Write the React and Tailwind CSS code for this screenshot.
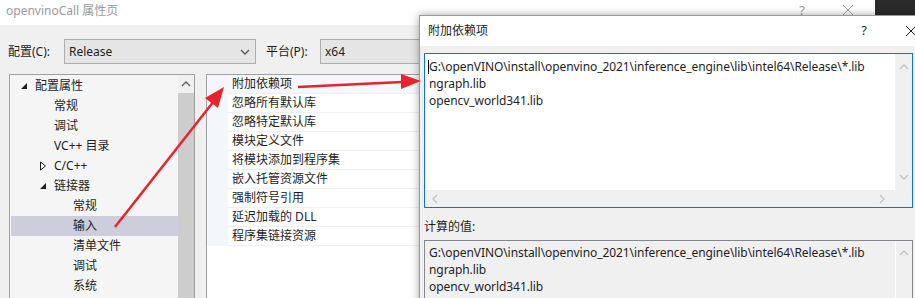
import React from "react";

const FONT = {
  fontFamily: '"Noto Sans", "Noto Sans CJK SC", sans-serif',
};

const treeItems = [
  { label: "配置属性", indent: 0, arrow: "open" },
  { label: "常规", indent: 1 },
  { label: "调试", indent: 1 },
  { label: "VC++ 目录", indent: 1 },
  { label: "C/C++", indent: 1, arrow: "closed" },
  { label: "链接器", indent: 1, arrow: "open" },
  { label: "常规", indent: 2 },
  { label: "输入", indent: 2, selected: true },
  { label: "清单文件", indent: 2 },
  { label: "调试", indent: 2 },
  { label: "系统", indent: 2 },
];

const props = [
  "附加依赖项",
  "忽略所有默认库",
  "忽略特定默认库",
  "模块定义文件",
  "将模块添加到程序集",
  "嵌入托管资源文件",
  "强制符号引用",
  "延迟加载的 DLL",
  "程序集链接资源",
];

const libs = [
  "G:\\openVINO\\install\\openvino_2021\\inference_engine\\lib\\intel64\\Release\\*.lib",
  "ngraph.lib",
  "opencv_world341.lib",
];

function Chevron({ dir = "down", className = "" }) {
  const d = {
    down: "M2 4 L6 8 L10 4",
    up: "M2 8 L6 4 L10 8",
    left: "M8 2 L4 6 L8 10",
    right: "M4 2 L8 6 L4 10",
  }[dir];
  return (
    <svg width="12" height="12" viewBox="0 0 12 12" className={className}>
      <path d={d} fill="none" stroke="currentColor" strokeWidth="1.3" />
    </svg>
  );
}

function CloseX({ className = "" }) {
  return (
    <svg width="12" height="12" viewBox="0 0 12 12" className={className}>
      <path d="M1 1 L11 11 M11 1 L1 11" stroke="currentColor" strokeWidth="1" />
    </svg>
  );
}

function TreeArrow({ type }) {
  if (type === "open") {
    return (
      <svg width="8" height="8" viewBox="0 0 8 8">
        <polygon points="7,1 7,7 1,7" fill="#1e1e1e" />
      </svg>
    );
  }
  return (
    <svg width="8" height="10" viewBox="0 0 8 10">
      <polygon points="1.5,1 6.5,5 1.5,9" fill="none" stroke="#1e1e1e" strokeWidth="1" />
    </svg>
  );
}

function Combo({ value, className = "" }) {
  return (
    <div
      className={`flex h-[25px] items-center justify-between border border-[#adadad] bg-[#e5e5e5] pl-[4px] pr-[4px] text-[12px] text-[#1e1e1e] ${className}`}
    >
      <span>{value}</span>
      <Chevron dir="down" className="text-[#555]" />
    </div>
  );
}

function Arrows() {
  return (
    <svg
      className="pointer-events-none absolute left-0 top-0"
      width="915"
      height="298"
      viewBox="0 0 915 298"
    >
      <line x1="115" y1="227" x2="214" y2="101" stroke="#e8232b" strokeWidth="2.5" />
      <polygon points="224,87 218,108 205,98" fill="#e8232b" />
      <line x1="298" y1="87" x2="402" y2="82" stroke="#e8232b" strokeWidth="2.5" />
      <polygon points="421,81 401,89 401,74" fill="#e8232b" />
    </svg>
  );
}

function Popup() {
  return (
    <div className="absolute left-[419px] top-[15px] h-[300px] w-[510px] border border-[#9a9a9a] bg-[#f0f0f0] shadow-[0_0_8px_rgba(0,0,0,0.35)]">
      <div className="flex h-[30px] items-center bg-white pl-[8px] text-[12px] text-[#1e1e1e]">
        <span>附加依赖项</span>
        <span className="ml-auto mr-[38px] text-[13px]">?</span>
        <CloseX className="mr-[11px] text-[#1e1e1e]" />
      </div>
      <div className="pl-[4px] pt-[7px]">
        <div className="flex h-[155px] w-[489px] flex-col border border-[#0078d7]">
          <div className="flex min-h-0 flex-1">
            <div className="flex-1 bg-white pl-[4px] pt-[4px] text-[12px] leading-[17px] tracking-[-0.07px] text-[#1e1e1e]">
              {libs.map((l, i) => (
                <div key={i} className="relative whitespace-nowrap">
                  {i === 0 && (
                    <span className="absolute left-[-1px] top-[2px] h-[14px] w-px bg-black" />
                  )}
                  {l}
                </div>
              ))}
            </div>
            <div className="flex w-[17px] flex-col items-center justify-between bg-[#f0f0f0] py-[7px] text-[#c2c2c2]">
              <Chevron dir="up" />
              <Chevron dir="down" />
            </div>
          </div>
          <div className="flex h-[17px] items-center justify-between bg-[#f0f0f0] pl-[4px] pr-[24px] text-[#c2c2c2]">
            <Chevron dir="left" />
            <Chevron dir="right" />
          </div>
        </div>
        <div className="mt-[10px] text-[12px] leading-[17px] text-[#1e1e1e]">计算的值:</div>
        <div className="mt-[5px] flex h-[80px] w-[489px] border border-[#828790] bg-[#f0f0f0]">
          <div className="flex-1 pl-[4px] pt-[3px] text-[12px] leading-[17px] tracking-[-0.07px] text-[#1e1e1e]">
            {[...libs, "%(AdditionalDependencies)"].map((l, i) => (
              <div key={i} className="whitespace-nowrap">
                {l}
              </div>
            ))}
          </div>
          <div className="flex w-[17px] flex-col items-center border-l border-white py-[6px] text-[#c2c2c2]">
            <Chevron dir="up" />
          </div>
        </div>
      </div>
    </div>
  );
}

export default function App() {
  return (
    <div
      className="relative h-[298px] w-[915px] overflow-hidden bg-[#f0f0f0]"
      style={FONT}
    >
      <div className="flex h-[25px] items-start bg-white">
        <span className="pl-[6px] pt-[2px] text-[12px] text-[#9a9a9a]">openvinoCall 属性页</span>
        <span className="ml-auto mr-[37px] pt-[1px] text-[13px] text-[#9a9a9a]">?</span>
        <CloseX className="mr-[21px] mt-[4px] text-[#9a9a9a]" />
        <div className="h-full w-[40px] bg-[#2b2b2b]" />
      </div>

      <div className="mt-[14px] flex items-center pl-[8px] text-[12px] text-[#1e1e1e]">
        <span className="w-[56px]">配置(C):</span>
        <Combo value="Release" className="w-[192px]" />
        <span className="ml-[10px] w-[54px]">平台(P):</span>
        <Combo value="x64" className="w-[160px]" />
      </div>

      <div className="mt-[10px] flex pl-[9px]">
        <div className="flex h-[240px] w-[186px] border border-[#a0a0a0] bg-[#f5f5f5]">
          <div className="flex-1 pl-[1px] pt-[1px]">
            {treeItems.map((t, i) => (
              <div
                key={i}
                className={`flex h-[20px] items-center text-[12px] text-[#1e1e1e] ${
                  t.selected ? "bg-[#cccedb]" : ""
                }`}
              >
                <div
                  className={`flex w-[14px] items-center justify-center ${
                    t.indent === 0 ? "ml-[6px]" : t.indent === 1 ? "ml-[25px]" : "ml-[44px]"
                  }`}
                >
                  {t.arrow && <TreeArrow type={t.arrow} />}
                </div>
                <span className="ml-[4px]">{t.label}</span>
              </div>
            ))}
          </div>
          <div className="flex w-[16px] flex-col bg-[#f0f0f0]">
            <div className="flex h-[18px] items-center justify-center text-[#606060]">
              <Chevron dir="up" />
            </div>
            <div className="flex-1 bg-[#cdcdcd]" />
          </div>
        </div>

        <div className="ml-[11px] h-[240px] w-[260px] border border-[#a0a0a0] bg-white">
          <div className="flex">
            <div className="w-[21px] bg-[#f3f6fb]" />
            <div className="flex-1">
              {props.map((p, i) => (
                <div
                  key={i}
                  className={`flex h-[19px] items-center border-b border-[#eef0f5] pl-[4px] text-[12px] text-[#1e1e1e] ${
                    i === 0 ? "bg-[#f5f7fc]" : ""
                  }`}
                >
                  {p}
                </div>
              ))}
            </div>
          </div>
        </div>
      </div>

      <Popup />
      <Arrows />
    </div>
  );
}
